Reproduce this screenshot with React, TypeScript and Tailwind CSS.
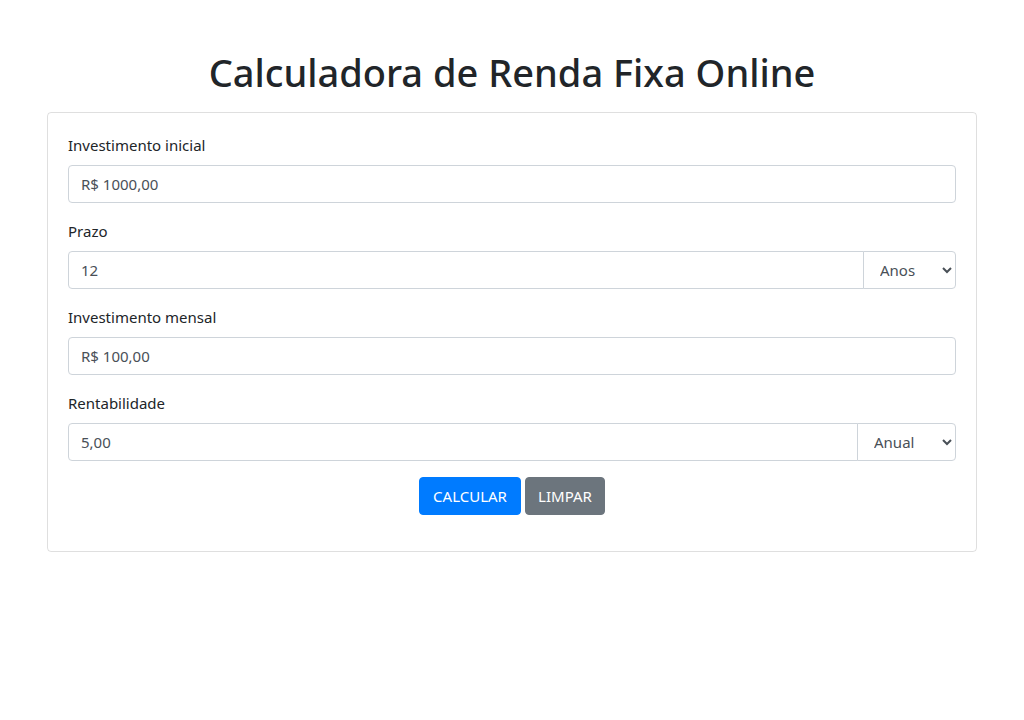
import React from "react";

const font = { fontFamily: '"Noto Sans", "Open Sans", sans-serif' };

function Label({ children }: { children: React.ReactNode }) {
  return <label className="block mb-2 text-[15px] leading-6 text-[#212529]">{children}</label>;
}

const inputCls =
  "block w-full h-[38px] px-3 py-1.5 text-[15px] leading-6 text-[#495057] bg-white border border-[#ced4da] outline-none";

const selectCls =
  "h-[38px] -ml-px pl-3 pr-[8px] text-[15px] text-[#495057] bg-white border border-[#ced4da] rounded-r rounded-l-none outline-none";

export default function App() {
  return (
    <div style={font} className="min-h-[720px] bg-white text-[#212529]">
      <div className="mx-auto w-[960px] px-[15px]">
        <h1 className="text-center text-[38px] leading-[48px] font-medium pt-[48px] mb-[16px] text-[#212529]">
          Calculadora de Renda Fixa Online
        </h1>
        <div className="border border-[rgba(0,0,0,0.125)] rounded p-5">
          <div className="mb-4">
            <Label>Investimento inicial</Label>
            <input className={inputCls + " rounded"} defaultValue="R$ 1000,00" />
          </div>
          <div className="mb-4">
            <Label>Prazo</Label>
            <div className="flex">
              <input className={inputCls + " flex-1 min-w-0 rounded-l rounded-r-none"} defaultValue="12" />
              <select defaultValue="Anos" className={selectCls + " w-[93px]"}>
                <option>Anos</option>
                <option>Meses</option>
              </select>
            </div>
          </div>
          <div className="mb-4">
            <Label>Investimento mensal</Label>
            <input className={inputCls + " rounded"} defaultValue="R$ 100,00" />
          </div>
          <div className="mb-4">
            <Label>Rentabilidade</Label>
            <div className="flex">
              <input className={inputCls + " flex-1 min-w-0 rounded-l rounded-r-none"} defaultValue="5,00" />
              <select defaultValue="Anual" className={selectCls + " w-[99px]"}>
                <option>Anual</option>
                <option>Mensal</option>
              </select>
            </div>
          </div>
          <div className="mb-4 flex justify-center gap-1">
            <button className="h-[38px] w-[102px] rounded bg-[#007bff] text-white text-[15px] leading-6 border border-[#007bff]">
              CALCULAR
            </button>
            <button className="h-[38px] w-[80px] rounded bg-[#6c757d] text-white text-[15px] leading-6 border border-[#6c757d]">
              LIMPAR
            </button>
          </div>
        </div>
      </div>
    </div>
  );
}
